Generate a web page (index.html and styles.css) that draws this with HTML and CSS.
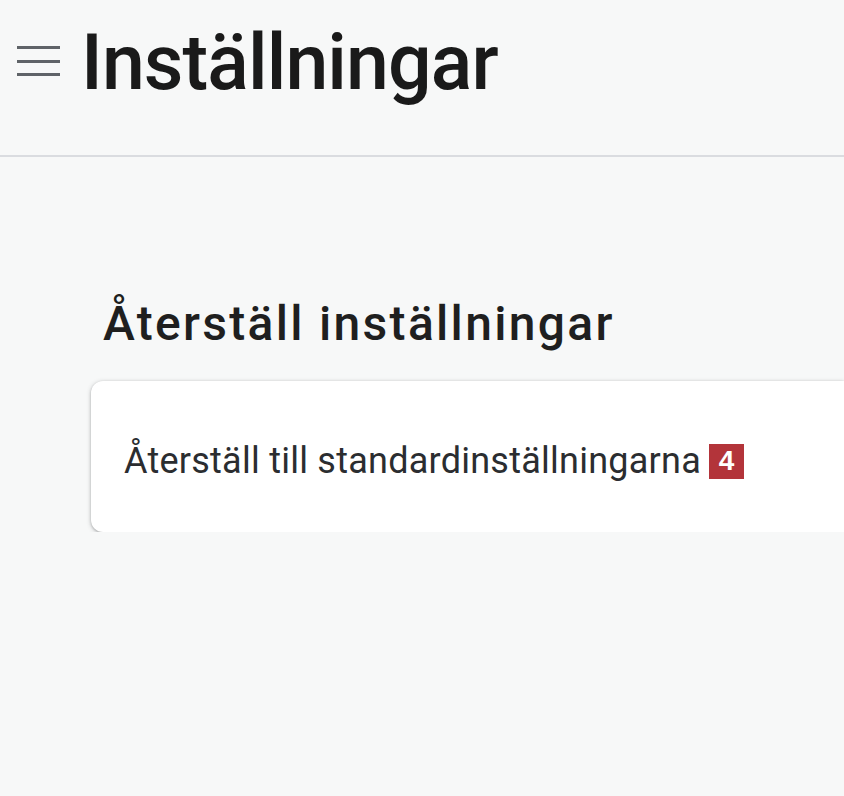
FILE: index.html
```html
<!DOCTYPE html>
<html lang="sv">
<head>
<meta charset="utf-8">
<link rel="stylesheet" href="styles.css">
</head>
<body>
<header class="topbar">
  <svg class="menu" width="44" height="32" viewBox="0 0 44 32" aria-hidden="true">
    <rect x="0" y="0" width="43" height="3" fill="#5f6368"/>
    <rect x="0" y="14" width="43" height="3" fill="#5f6368"/>
    <rect x="0" y="27" width="43" height="3" fill="#5f6368"/>
  </svg>
  <h1 class="title">Inställningar</h1>
</header>
<main class="content">
  <h2 class="section-title">Återställ inställningar</h2>
  <div class="card">
    <span class="row-label">Återställ till standardinställningarna</span>
    <span class="badge">4</span>
  </div>
</main>
</body>
</html>
```
FILE: styles.css
```css
html, body {
  margin: 0;
  padding: 0;
  background: #f7f8f8;
  font-family: Roboto, "Open Sans", sans-serif;
  color: #1f1f1f;
  overflow: hidden;
}
.topbar {
  height: 157px;
  box-sizing: border-box;
  border-bottom: 2px solid #dadce0;
  display: flex;
  align-items: flex-start;
  padding: 25px 0 0 17px;
}
.menu {
  flex: none;
  margin-top: 21px;
}
.title {
  margin: 0 0 0 20px;
  font-size: 77px;
  line-height: 77px;
  font-weight: 500;
  letter-spacing: -0.9px;
  color: #1a1a1a;
}
.content {
  padding: 143px 0 0 91px;
}
.section-title {
  margin: 0 0 33px 12px;
  font-size: 48px;
  line-height: 48px;
  font-weight: 500;
  letter-spacing: 2.3px;
  color: #1f1f1f;
}
.card {
  background: #fff;
  height: 151px;
  box-sizing: border-box;
  padding: 9px 0 0 33px;
  border-radius: 12px 0 0 12px;
  box-shadow: 0 1px 4px rgba(60,64,67,0.35), 0 1px 2px rgba(60,64,67,0.2);
  display: flex;
  align-items: center;
}
.row-label {
  font-size: 36px;
  line-height: 36px;
  letter-spacing: 0.25px;
  color: #2b2d30;
}
.badge {
  margin-left: 8px;
  background: #b3343a;
  color: #fff;
  font-family: "Liberation Sans", Arial, sans-serif;
  font-weight: 700;
  font-size: 28px;
  width: 35px;
  height: 35px;
  display: inline-flex;
  align-items: center;
  justify-content: center;
}
```
